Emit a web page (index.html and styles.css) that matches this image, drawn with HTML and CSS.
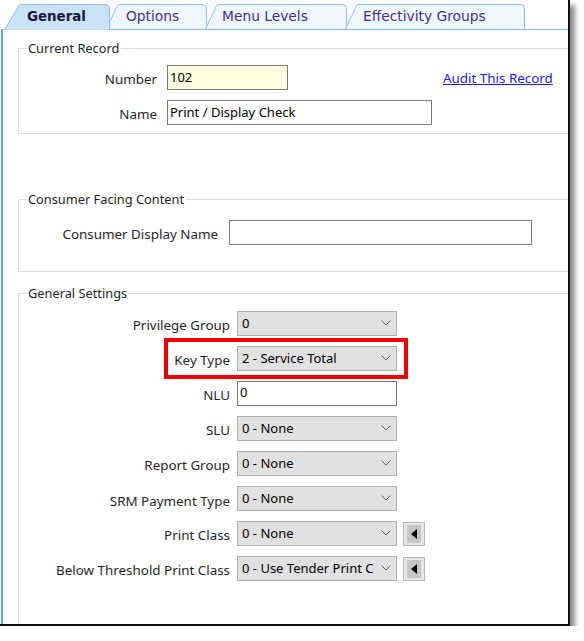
FILE: index.html
```html
<!DOCTYPE html>
<html lang="en">
<head>
    <meta charset="UTF-8">
    <meta name="viewport" content="width=device-width, initial-scale=1.0">
    <title>Key Type</title>
    <link rel="stylesheet" href="styles.css">
</head>
<body>
    <div class="window">
        <div class="tabs">
            <div class="tab tab-active tab-general">
                <svg class="tab-edge" width="18" height="26" viewBox="0 0 18 26">
                    <path class="edge-fill" d="M0 26 L15 1.5 Q16 0.5 18 0.5 V26 Z"/>
                    <path class="edge-line" d="M0.5 26 L15 1.5 Q16 0.5 18 0.5"/>
                </svg>
                <div class="tab-label">General</div>
            </div>
            <div class="tab tab-options">
                <svg class="tab-edge" width="14" height="25" viewBox="0 0 14 25">
                    <path class="edge-fill" d="M0 25 L11.5 1.5 Q12.5 0.5 14 0.5 V25 Z"/>
                    <path class="edge-line" d="M0.5 25 L11.5 1.5 Q12.5 0.5 14 0.5"/>
                </svg>
                <div class="tab-label">Options</div>
            </div>
            <div class="tab tab-menu">
                <svg class="tab-edge" width="14" height="25" viewBox="0 0 14 25">
                    <path class="edge-fill" d="M0 25 L11.5 1.5 Q12.5 0.5 14 0.5 V25 Z"/>
                    <path class="edge-line" d="M0.5 25 L11.5 1.5 Q12.5 0.5 14 0.5"/>
                </svg>
                <div class="tab-label">Menu Levels</div>
            </div>
            <div class="tab tab-groups">
                <svg class="tab-edge" width="14" height="25" viewBox="0 0 14 25">
                    <path class="edge-fill" d="M0 25 L11.5 1.5 Q12.5 0.5 14 0.5 V25 Z"/>
                    <path class="edge-line" d="M0.5 25 L11.5 1.5 Q12.5 0.5 14 0.5"/>
                </svg>
                <div class="tab-label">Effectivity Groups</div>
            </div>
        </div>

        <div class="panel">
            <fieldset class="group group-record">
                <legend>Current Record</legend>
                <div class="row">
                    <label class="label">Number</label>
                    <input class="field field-number" type="text" value="102" readonly>
                    <a class="audit" href="#">Audit This Record</a>
                </div>
                <div class="row">
                    <label class="label">Name</label>
                    <input class="field field-name" type="text" value="Print / Display Check" readonly>
                </div>
            </fieldset>

            <fieldset class="group group-consumer">
                <legend>Consumer Facing Content</legend>
                <div class="row">
                    <label class="label">Consumer Display Name</label>
                    <input class="field field-display" type="text" value="" readonly>
                </div>
            </fieldset>

            <fieldset class="group group-settings">
                <legend>General Settings</legend>
                <div class="row">
                    <label class="label">Privilege Group</label>
                    <div class="combo"><span class="combo-value">0</span><svg class="chevron" width="10" height="6" viewBox="0 0 10 6"><polyline points="0.5,0.5 5,5 9.5,0.5"/></svg></div>
                </div>
                <div class="row row-key">
                    <label class="label">Key Type</label>
                    <div class="combo"><span class="combo-value">2 - Service Total</span><svg class="chevron" width="10" height="6" viewBox="0 0 10 6"><polyline points="0.5,0.5 5,5 9.5,0.5"/></svg></div>
                    <div class="highlight"></div>
                </div>
                <div class="row">
                    <label class="label">NLU</label>
                    <input class="field field-nlu" type="text" value="0" readonly>
                </div>
                <div class="row">
                    <label class="label">SLU</label>
                    <div class="combo"><span class="combo-value">0 - None</span><svg class="chevron" width="10" height="6" viewBox="0 0 10 6"><polyline points="0.5,0.5 5,5 9.5,0.5"/></svg></div>
                </div>
                <div class="row">
                    <label class="label">Report Group</label>
                    <div class="combo"><span class="combo-value">0 - None</span><svg class="chevron" width="10" height="6" viewBox="0 0 10 6"><polyline points="0.5,0.5 5,5 9.5,0.5"/></svg></div>
                </div>
                <div class="row">
                    <label class="label label-low">SRM Payment Type</label>
                    <div class="combo"><span class="combo-value">0 - None</span><svg class="chevron" width="10" height="6" viewBox="0 0 10 6"><polyline points="0.5,0.5 5,5 9.5,0.5"/></svg></div>
                </div>
                <div class="row">
                    <label class="label">Print Class</label>
                    <div class="combo"><span class="combo-value">0 - None</span><svg class="chevron" width="10" height="6" viewBox="0 0 10 6"><polyline points="0.5,0.5 5,5 9.5,0.5"/></svg></div>
                    <div class="pick"><span class="pick-face"><span class="pick-arrow"></span></span></div>
                </div>
                <div class="row">
                    <label class="label">Below Threshold Print Class</label>
                    <div class="combo"><span class="combo-value">0 - Use Tender Print C</span><svg class="chevron" width="10" height="6" viewBox="0 0 10 6"><polyline points="0.5,0.5 5,5 9.5,0.5"/></svg></div>
                    <div class="pick"><span class="pick-face"><span class="pick-arrow"></span></span></div>
                </div>
            </fieldset>
        </div>
    </div>
</body>
</html>
```

FILE: styles.css
```css
body {
    margin: 0;
    background: #fff;
    font-family: "Noto Sans", "Liberation Sans", Arial, sans-serif;
    color: #1f1f2a;
}
.window {
    width: 570px;
    height: 626px;
    box-sizing: border-box;
    padding-left: 1px;
    border-right: 2px solid #111;
    border-bottom: 2px solid #111;
    background: #fff;
    box-shadow: 5px 5px 5px rgba(0, 0, 0, 0.45);
    display: flex;
    flex-direction: column;
    overflow: hidden;
}

/* tab strip */
.tabs {
    height: 29px;
    box-sizing: border-box;
    padding: 4px 0 0 3px;
    display: flex;
    align-items: flex-end;
    position: relative;
    z-index: 1;
    flex: none;
}
.tab {
    display: flex;
    height: 25px;
    position: relative;
}
.tab-edge {
    display: block;
    flex: none;
}
.edge-fill {
    fill: #eef6fe;
}
.edge-line {
    fill: none;
    stroke: #8dbdee;
    stroke-width: 1;
}
.tab-label {
    box-sizing: border-box;
    height: 100%;
    border-top: 1px solid #8dbdee;
    border-right: 1px solid #8dbdee;
    border-top-right-radius: 5px;
    background: #eef6fe;
    font: 13.8px/23px "DejaVu Sans", Verdana, sans-serif;
    color: #45308f;
    white-space: nowrap;
}
.tab-active {
    height: 26px;
    margin-bottom: -1px;
    z-index: 2;
}
.tab-active .edge-fill,
.tab-active .tab-label {
    fill: #c9e2f8;
    background: #c9e2f8;
}
.tab-active .tab-label {
    font-weight: bold;
    font-size: 13.4px;
    line-height: 24px;
    color: #17173a;
}
.tab-general .tab-label { width: 88px; padding-left: 5px; }
.tab-options { margin-left: -4px; }
.tab-options .tab-label { width: 87px; padding-left: 6px; }
.tab-menu { margin-left: -2px; }
.tab-menu .tab-label { width: 128px; padding-left: 3px; }
.tab-groups { margin-left: -2px; }
.tab-groups .tab-label { width: 166px; padding-left: 4px; }

/* page body */
.panel {
    flex: 1;
    min-height: 0;
    border-left: 2px solid #5f9fe5;
    border-top: 1px solid #86b6ea;
    padding-left: 15px;
    overflow: hidden;
}
.group {
    margin: 0 -40px 0 0;
    border: 1px solid #dcdcdc;
    min-width: 0;
}
.group legend {
    margin-left: 7px;
    padding: 0 2px;
    font-size: 12.8px;
    line-height: 16px;
    color: #1e1e28;
}
.group-record {
    margin-top: 10px;
    padding: 9px 0 8px;
}
.group-consumer {
    margin-top: 57px;
    padding: 13px 0 26px;
}
.group-settings {
    margin-top: 13px;
    padding: 10px 0 60px;
}

.row {
    display: flex;
    align-items: center;
    height: 25px;
}
.row + .row {
    margin-top: 10px;
}
.label {
    flex: none;
    text-align: right;
    font-size: 13.4px;
    line-height: 18px;
    padding-top: 2px;
    white-space: nowrap;
}
.group-record .label { width: 138px; margin-right: 10px; }
.group-consumer .label { width: 199px; margin-right: 11px; }
.group-settings .label { width: 211px; margin-right: 7px; }
.label-low { padding-top: 4px; }

.field {
    box-sizing: border-box;
    height: 25px;
    margin: 0;
    padding: 0 2px 2px;
    border: 1px solid #7a7a7a;
    background: #fff;
    font-family: "Noto Sans", "Liberation Sans", Arial, sans-serif;
    font-size: 13px;
    color: #000;
    outline: none;
}
.field-number { width: 121px; background: #ffffe1; }
.field-name { width: 265px; }
.field-display { width: 303px; }
.field-nlu { width: 160px; padding-bottom: 4px; }

.audit {
    margin-left: 155px;
    font-size: 13.4px;
    color: #1c1ce6;
    text-decoration: underline;
}

.combo {
    box-sizing: border-box;
    width: 160px;
    height: 25px;
    padding: 0 5px 1px 4px;
    border: 1px solid #adadad;
    background: #e1e1e1;
    display: flex;
    align-items: center;
    font-size: 13px;
    color: #000;
}
.combo-value {
    flex: 1;
    white-space: nowrap;
    overflow: hidden;
}
.chevron {
    flex: none;
    margin-left: 3px;
}
.chevron polyline {
    fill: none;
    stroke: #606060;
    stroke-width: 1;
}

.pick {
    box-sizing: border-box;
    width: 22px;
    height: 24px;
    margin-left: 6px;
    border: 1px solid #b4b4b4;
    background: #e6e6e6;
    display: flex;
    align-items: center;
    justify-content: center;
}
.pick-face {
    width: 14px;
    height: 18px;
    background: #c6c6c6;
    display: flex;
    align-items: center;
    justify-content: center;
}
.pick-arrow {
    width: 0;
    height: 0;
    border-top: 5px solid transparent;
    border-bottom: 5px solid transparent;
    border-right: 6px solid #000;
}

/* annotation */
.row-key {
    position: relative;
}
.highlight {
    position: absolute;
    left: 145px;
    top: -8px;
    width: 244px;
    height: 41px;
    box-sizing: border-box;
    border: 4px solid #ee0000;
    pointer-events: none;
}
```
